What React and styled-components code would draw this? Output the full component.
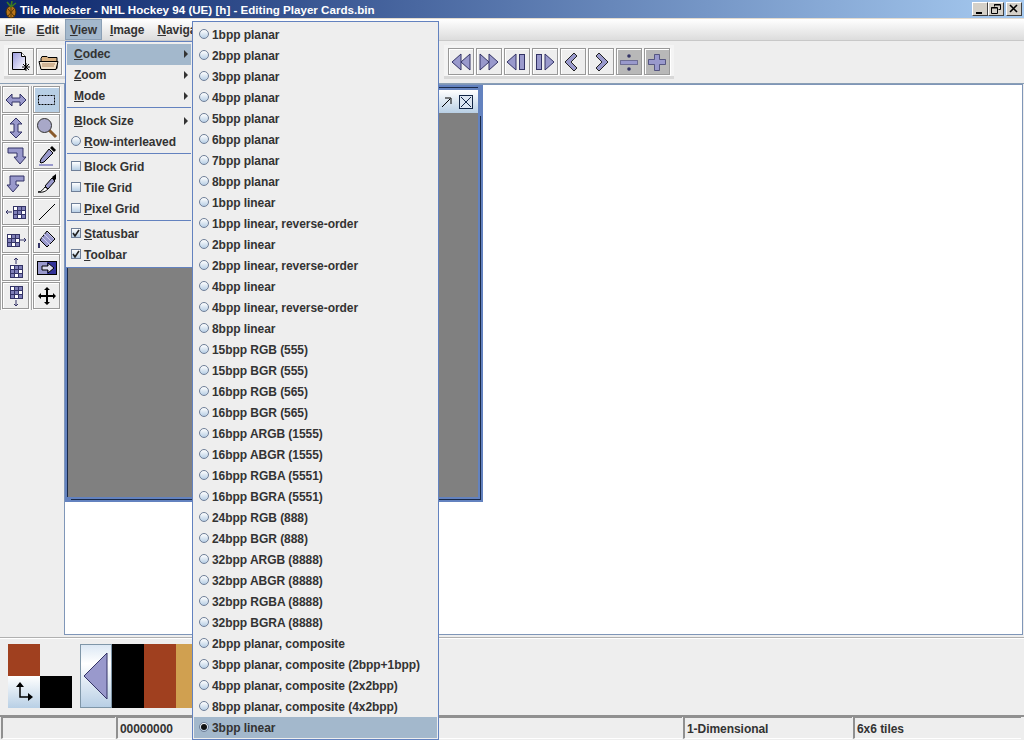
import React from 'react'
import styled, { createGlobalStyle } from 'styled-components'

const GlobalStyle = createGlobalStyle`
  html, body { margin: 0; padding: 0; background: #eeeeee; }
  body { font-family: "Liberation Sans", Arial, sans-serif; font-size: 12px; font-weight: bold; letter-spacing: -0.05px; color: #333333; }
`

const FILL = '#9999cc'
const LINE = '#333366'

const Glyph = ({ size = 22, children }) => (
  <svg width={size} height={size} viewBox="0 0 22 22">{children}</svg>
)

const Arrow = ({ d }) => <path d={d} fill={FILL} stroke={LINE} strokeWidth="1" strokeLinejoin="miter" />

const gridCells = (x, y, cols, rows, cell = 4) => {
  const out = []
  for (let r = 0; r < rows; r++) {
    for (let c = 0; c < cols; c++) {
      out.push(<rect key={`${r}-${c}`} x={x + c * cell + 0.5} y={y + r * cell + 0.5} width={cell} height={cell} fill={(r + c) % 3 === 0 ? '#ffffff' : '#8080b8'} stroke={LINE} />)
    }
  }
  return out
}

const icons = {
  newDoc: (
    <Glyph>
      <defs>
        <linearGradient id="docFill" x1="0" y1="0" x2="1" y2="1"><stop offset="0" stopColor="#9999dd" /><stop offset="1" stopColor="#ffffff" /></linearGradient>
      </defs>
      <path d="M2.5 1.5h9l4 4v13h-13z" fill="url(#docFill)" stroke="#000" />
      <path d="M11.5 1.5v4h4" fill="#fff" stroke="#000" />
      <path d="M16 12v8M12 16h8M13 13l6 6M19 13l-6 6" stroke="#000" fill="none" />
    </Glyph>
  ),
  folder: (
    <Glyph>
      <path d="M3 7.5l1-2h5l1 1h9v11H3z" fill="#d8b080" stroke="#000" />
      <path d="M1 10.5h15l4 0-2 8H3z" fill="#f0e0c8" stroke="#000" />
      <path d="M4 13h13M4 15h12" stroke="#b08860" />
    </Glyph>
  ),
  wider: <Glyph><Arrow d="M1 11l6-6v4h8V5l6 6-6 6v-4H7v4z" /></Glyph>,
  taller: <Glyph><Arrow d="M11 1l6 6h-4v8h4l-6 6-6-6h4V7H5z" /></Glyph>,
  downRight: <Glyph><Arrow d="M3 3h15v9h3l-6 7-6-7h3V8H3z" /></Glyph>,
  downLeft: <Glyph><Arrow d="M19 3H5v9H2l6 7 6-7h-3V8h8z" /></Glyph>,
  rowsLeft: (
    <Glyph>
      <path d="M1 11h6M1 11l2-2M1 11l2 2" stroke={LINE} fill="none" />
      {gridCells(8, 5, 3, 3)}
    </Glyph>
  ),
  rowsRight: (
    <Glyph>
      {gridCells(2, 5, 3, 3)}
      <path d="M15 11h6M21 11l-2-2M21 11l-2 2" stroke={LINE} fill="none" />
    </Glyph>
  ),
  colsUp: (
    <Glyph>
      <path d="M11 1v6M11 1l-2 2M11 1l2 2" stroke={LINE} fill="none" />
      {gridCells(5, 8, 3, 3)}
    </Glyph>
  ),
  colsDown: (
    <Glyph>
      {gridCells(5, 1, 3, 3)}
      <path d="M11 15v6M11 21l-2-2M11 21l2-2" stroke={LINE} fill="none" />
    </Glyph>
  ),
  select: <Glyph><rect x="2.5" y="6.5" width="16" height="9" fill="#c0d0e8" stroke="#000" strokeDasharray="2 1" /></Glyph>,
  zoom: (
    <Glyph>
      <path d="M13 13l7 7" stroke="#8a5a2a" strokeWidth="3" />
      <circle cx="8.5" cy="8.5" r="7" fill="#a8a8c8" stroke="#333" />
    </Glyph>
  ),
  picker: (
    <Glyph>
      <path d="M13 4l4 4-9 9-3 1-1-1 1-3z" fill={FILL} stroke="#000" />
      <path d="M14 3l2-2 4 4-2 2z" fill="#000" />
      <path d="M3 20h14" stroke={FILL} strokeWidth="2" />
    </Glyph>
  ),
  brush: (
    <Glyph>
      <path d="M2 19c4 0 5-3 7-5l3 2c-2 2-5 4-10 3z" fill="#fff" stroke="#000" />
      <path d="M9 13l7-8 3 3-7 8z" fill={FILL} stroke="#000" />
      <path d="M16 4l4-3v5l-2 2z" fill="#000" />
    </Glyph>
  ),
  line: <Glyph><path d="M3 19L19 3" stroke="#000" /></Glyph>,
  bucket: (
    <Glyph>
      <path d="M11 2l8 8-8 8-7-7z" fill={FILL} stroke="#000" />
      <path d="M8 5l8 8M6 8l8 8M11 3l7 7" stroke="#ccccee" />
      <path d="M3 14v5" stroke={LINE} strokeWidth="2" />
    </Glyph>
  ),
  replace: (
    <Glyph>
      <rect x="1.5" y="4.5" width="19" height="13" fill="#333399" stroke="#000" />
      <rect x="2" y="5" width="9" height="12" fill={FILL} />
      <path d="M6 9h6V6l6 5-6 5v-3H6z" fill="#ddddee" stroke="#000" />
    </Glyph>
  ),
  move: <Glyph><path d="M11 2l3 3h-2v5h5V8l3 3-3 3v-2h-5v5h2l-3 3-3-3h2v-5H5v2l-3-3 3-3v2h5V5H8z" fill="#000" /></Glyph>,
  first: <Glyph><Arrow d="M11 3v16L2 11zM20 3v16l-9-8z" /></Glyph>,
  last: <Glyph><Arrow d="M2 3v16l9-8zM11 3v16l9-8z" /></Glyph>,
  pageUp: <Glyph><Arrow d="M10 3v16l-9-8z" /><rect x="13.5" y="3.5" width="5" height="15" fill={FILL} stroke={LINE} /></Glyph>,
  pageDown: <Glyph><rect x="2.5" y="3.5" width="5" height="15" fill={FILL} stroke={LINE} /><Arrow d="M11 3v16l9-8z" /></Glyph>,
  back: <Glyph><path d="M12 2l3 3-6 6 6 6-3 3-9-9z" fill={FILL} stroke="#222" /></Glyph>,
  forward: <Glyph><path d="M9 2l-3 3 6 6-6 6 3 3 9-9z" fill={FILL} stroke="#222" /></Glyph>,
  divide: (
    <Glyph>
      <circle cx="11" cy="5" r="1.8" fill={LINE} />
      <rect x="2.5" y="9.5" width="17" height="4" fill={FILL} stroke={LINE} strokeOpacity="0.5" />
      <circle cx="11" cy="18" r="1.8" fill={LINE} />
    </Glyph>
  ),
  plus: <Glyph><path d="M8.5 3.5h5v5h6v5h-6v6h-5v-6h-6v-5h6z" fill={FILL} stroke={LINE} strokeOpacity="0.7" /></Glyph>,
}

const Page = styled.div`
  position: relative;
  width: 1024px;
  height: 740px;
  overflow: hidden;
  display: flex;
  flex-direction: column;
  background: #eeeeee;
`

const TitleBar = styled.div`
  height: 18px;
  flex: none;
  display: flex;
  align-items: center;
  padding: 0 2px 0 3px;
  background: linear-gradient(90deg, #0a246a, #a6caf0);
`

const TitleText = styled.span`
  margin-left: 1px;
  font-size: 11.6px;
  letter-spacing: 0;
  color: #ffffff;
  white-space: nowrap;
  flex: 1;
`

const WinControls = styled.div`
  display: flex;
`

const WinButton = styled.div`
  width: 16px;
  height: 14px;
  margin-left: ${p => p.$gap || 0}px;
  background: #d4d0c8;
  border: 1px solid;
  border-color: #ffffff #404040 #404040 #ffffff;
  box-sizing: border-box;
  display: flex;
  align-items: center;
  justify-content: center;
`

const MenuBar = styled.div`
  height: 23px;
  flex: none;
  box-sizing: border-box;
  display: flex;
  border-top: 1px solid #e4dcd0;
  border-bottom: 1px solid #c8c8c8;
  background: linear-gradient(180deg, #ffffff, #dcdcdc);
`

const MenuTitle = styled.div`
  height: 21px;
  line-height: 23px;
  box-sizing: border-box;
  padding: 0 ${p => p.$pad || 6}px;
  ${p => p.$open && `
    background: #a3b8cc;
    outline: 1px solid #8a9fb5;
    outline-offset: -1px;
  `}
`

const ToolBar = styled.div`
  height: 43px;
  flex: none;
  box-sizing: border-box;
  display: flex;
  padding: 4px 4px 0;
  border-bottom: 1px solid #8a9fb5;
`

const ToolGroup = styled.div`
  height: 34px;
  box-sizing: border-box;
  display: flex;
  gap: 2px;
  padding: 3px 4px 0;
  margin-left: ${p => p.$offset || 0}px;
  background: #f4f4f4;
  border-bottom: 3px solid #d8d8d8;
`

const Btn = styled.div`
  width: ${p => p.$w || 26}px;
  height: 27px;
  box-sizing: border-box;
  display: flex;
  align-items: center;
  justify-content: center;
  background: ${p => (p.$active ? '#b8cfe5' : p.$pressed ? '#b8b8b8' : '#eeeeee')};
  border: 1px solid #999999;
  box-shadow: inset 1px 1px 0 #ffffff, 1px 1px 0 #ffffff;
`

const Workspace = styled.div`
  flex: 1;
  display: flex;
  min-height: 0;
`

const ToolDock = styled.div`
  width: 64px;
  flex: none;
  box-sizing: border-box;
  display: flex;
  gap: 2px;
  padding-top: 2px;
  align-items: flex-start;
`

const ToolColumn = styled.div`
  display: flex;
  flex-direction: column;
  gap: 1px;
  padding-left: 2px;
  padding-bottom: 1px;
  background: linear-gradient(90deg, #a8a8a8 0, #a8a8a8 1px, #ffffff 1px, #ffffff 2px, transparent 2px);
`

const Desktop = styled.div`
  position: relative;
  flex: 1;
  margin-right: 1px;
  margin-bottom: 2px;
  background: #ffffff;
  border: 1px solid #7f96b8;
`

const InternalFrame = styled.div`
  position: absolute;
  left: 0;
  top: 0;
  width: 418px;
  height: 417px;
  box-sizing: border-box;
  display: flex;
  flex-direction: column;
  padding: 5px 5px 5px 3px;
  background: #6382bf;
`

const FrameTitle = styled.div`
  height: 23px;
  flex: none;
  display: flex;
  justify-content: flex-end;
  align-items: center;
  padding-right: 5px;
  background: linear-gradient(180deg, #ffffff, #b8cfe5);
  box-shadow: 0 -2px 0 #6382bf, 0 -3px 0 #1a2a4a;
`

const FrameClose = styled.div`
  width: 14px;
  height: 14px;
  box-sizing: border-box;
  margin-left: 6px;
  display: flex;
  background: #dce6f2;
  border: 1px solid #122646;
`

const FrameBody = styled.div`
  flex: 1;
  background: #808080;
  box-shadow: -1px 0 0 #1a2a4a, 2px 2px 0 #6382bf, 3px 3px 0 #1a2a4a;
`

const PaletteBar = styled.div`
  height: 80px;
  flex: none;
  box-sizing: border-box;
  display: flex;
  padding: 6px 8px 0;
  border-top: 1px solid #b0b0b0;
  border-bottom: 2px solid #909090;
  box-shadow: inset 0 1px 0 #ffffff;
`

const ColorPair = styled.div`
  display: grid;
  grid-template-columns: 32px 32px;
  grid-template-rows: 32px 32px;
  width: 64px;
  height: 64px;
  margin-right: 8px;
`

const Swatch = styled.div`
  width: ${p => p.$w || 32}px;
  height: ${p => p.$h || 32}px;
  background: ${p => p.$color};
`

const SwapCell = styled.div`
  display: flex;
  align-items: center;
  justify-content: center;
  background: linear-gradient(180deg, #ffffff, #b8cfe5);
`

const PalBack = styled.div`
  width: 32px;
  height: 64px;
  box-sizing: border-box;
  display: flex;
  align-items: center;
  border: 1px solid #7f96a8;
  background: linear-gradient(180deg, #dce8f4, #ffffff 30%, #b8cfe5);
`

const PalRow = styled.div`
  display: flex;
`

const StatusBar = styled.div`
  height: 23px;
  flex: none;
  display: flex;
  gap: 1px;
  padding-left: 1px;
`

const StatusCell = styled.div`
  width: ${p => p.$w}px;
  height: 22px;
  box-sizing: border-box;
  padding-left: 2px;
  line-height: 22px;
  background: #eeeeee;
  border-left: 2px solid #909090;
  border-top: 1px solid #909090;
  border-bottom: 1px solid #ffffff;
  white-space: nowrap;
`

const Popup = styled.div`
  position: absolute;
  left: ${p => p.$x}px;
  top: ${p => p.$y}px;
  width: ${p => p.$w}px;
  box-sizing: border-box;
  padding: 2px 1px 1px;
  background: #eeeeee;
  border: 1px solid #6382bf;
  white-space: nowrap;
`

const MenuItem = styled.div`
  position: relative;
  height: 21px;
  line-height: 21px;
  display: flex;
  align-items: center;
  padding-left: ${p => p.$indent}px;
  ${p => p.$selected && 'background: #a3b8cc;'}
`

const Label = styled.span`
  padding-top: ${p => p.$drop || 0}px;
  line-height: 19px;
`

const Separator = styled.div`
  height: 1px;
  margin: 0 0 3px;
  background: #6382bf;
`

const Mark = styled.span`
  width: 10px;
  height: 10px;
  flex: none;
  margin-right: 3px;
  margin-bottom: ${p => p.$lift}px;
  box-sizing: border-box;
  display: flex;
  align-items: center;
  justify-content: center;
  border: 1px solid #6f7f98;
  border-radius: ${p => (p.$round ? '50%' : '0')};
  background: linear-gradient(180deg, #ffffff, #b8cfe5);
`

const Dot = styled.span`
  width: 6px;
  height: 6px;
  border-radius: 50%;
  background: #111111;
`

const SubArrow = styled.span`
  position: absolute;
  right: 3px;
  top: 6px;
  border-left: 4px solid #333333;
  border-top: 4px solid transparent;
  border-bottom: 4px solid transparent;
`

const viewMenu = [
  { label: 'Codec', key: 'C', sub: true, selected: true },
  { label: 'Zoom', key: 'Z', sub: true },
  { label: 'Mode', key: 'M', sub: true },
  'sep',
  { label: 'Block Size', key: 'B', sub: true },
  { label: 'Row-interleaved', key: 'R', mark: 'radio' },
  'sep',
  { label: 'Block Grid', mark: 'check' },
  { label: 'Tile Grid', mark: 'check' },
  { label: 'Pixel Grid', key: 'P', mark: 'check' },
  'sep',
  { label: 'Statusbar', key: 'S', mark: 'check', on: true },
  { label: 'Toolbar', key: 'T', mark: 'check', on: true },
]

const codecs = [
  '1bpp planar', '2bpp planar', '3bpp planar', '4bpp planar', '5bpp planar', '6bpp planar', '7bpp planar', '8bpp planar',
  '1bpp linear', '1bpp linear, reverse-order', '2bpp linear', '2bpp linear, reverse-order', '4bpp linear', '4bpp linear, reverse-order', '8bpp linear',
  '15bpp RGB (555)', '15bpp BGR (555)', '16bpp RGB (565)', '16bpp BGR (565)', '16bpp ARGB (1555)', '16bpp ABGR (1555)', '16bpp RGBA (5551)', '16bpp BGRA (5551)',
  '24bpp RGB (888)', '24bpp BGR (888)', '32bpp ARGB (8888)', '32bpp ABGR (8888)', '32bpp RGBA (8888)', '32bpp BGRA (8888)',
  '2bpp planar, composite', '3bpp planar, composite (2bpp+1bpp)', '4bpp planar, composite (2x2bpp)', '8bpp planar, composite (4x2bpp)', '3bpp linear',
]

const leftTools = ['wider', 'taller', 'downRight', 'downLeft', 'rowsLeft', 'rowsRight', 'colsUp', 'colsDown']
const rightTools = ['select', 'zoom', 'picker', 'brush', 'line', 'bucket', 'replace', 'move']
const navTools = ['first', 'last', 'pageUp', 'pageDown', 'back', 'forward', 'divide', 'plus']

const Mnemonic = ({ text, k }) => {
  if (!k) return <span>{text}</span>
  return <span><u>{k}</u>{text.slice(1)}</span>
}

export default function App() {
  return (
    <Page>
      <GlobalStyle />
      <TitleBar>
        <svg width="16" height="17" viewBox="0 0 16 17">
          <ellipse cx="8" cy="11" rx="5" ry="6" fill="#b8741a" stroke="#3a2a08" />
          <path d="M5 8l6 7M11 8l-6 7M8 6v10" stroke="#5a3a08" fill="none" />
          <path d="M8 6L4 1M8 6l1-6M8 6l5-4" stroke="#3d7a20" strokeWidth="1.6" fill="none" />
        </svg>
        <TitleText>Tile Molester - NHL Hockey 94 (UE) [h] - Editing Player Cards.bin</TitleText>
        <WinControls>
          <WinButton>
            <svg width="10" height="10" viewBox="0 0 10 10"><path d="M1 8h6v2H1z" fill="#000" /></svg>
          </WinButton>
          <WinButton>
            <svg width="10" height="10" viewBox="0 0 10 10"><path d="M3.5 2.5V.5h6v5h-2M.5 3.5h6v6h-6z" fill="none" stroke="#000" /><path d="M3 1h6M0 4h6" stroke="#000" /></svg>
          </WinButton>
          <WinButton $gap={2}>
            <svg width="10" height="10" viewBox="0 0 10 10"><path d="M1 1l7 7M8 1L1 8" stroke="#000" strokeWidth="1.6" /></svg>
          </WinButton>
        </WinControls>
      </TitleBar>

      <MenuBar>
        <MenuTitle $pad={5}><u>F</u>ile</MenuTitle>
        <MenuTitle $pad={6}><u>E</u>dit</MenuTitle>
        <MenuTitle $open $pad={5}><u>V</u>iew</MenuTitle>
        <MenuTitle $pad={8}><u>I</u>mage</MenuTitle>
        <MenuTitle $pad={5}><u>N</u>avigate</MenuTitle>
      </MenuBar>

      <ToolBar>
        <ToolGroup>
          <Btn>{icons.newDoc}</Btn>
          <Btn>{icons.folder}</Btn>
        </ToolGroup>
        <ToolGroup $offset={378}>
          {navTools.map(name => (
            <Btn key={name} $pressed={name === 'divide' || name === 'plus'}>{icons[name]}</Btn>
          ))}
        </ToolGroup>
      </ToolBar>

      <Workspace>
        <ToolDock>
          <ToolColumn>
            {leftTools.map(name => <Btn key={name} $w={27}>{icons[name]}</Btn>)}
          </ToolColumn>
          <ToolColumn>
            {rightTools.map(name => <Btn key={name} $w={27} $active={name === 'select'}>{icons[name]}</Btn>)}
          </ToolColumn>
        </ToolDock>
        <Desktop>
          <InternalFrame>
            <FrameTitle>
              <svg width="12" height="12" viewBox="0 0 12 12"><path d="M1 11l8-8M4 2h6v6" fill="none" stroke="#000" /></svg>
              <FrameClose>
                <svg width="12" height="12" viewBox="0 0 12 12"><path d="M1 1l10 10M11 1L1 11" stroke="#122646" /></svg>
              </FrameClose>
            </FrameTitle>
            <FrameBody />
          </InternalFrame>
        </Desktop>
      </Workspace>

      <PaletteBar>
        <ColorPair>
          <Swatch $color="#a0401f" />
          <span />
          <SwapCell>
            <svg width="20" height="22" viewBox="0 0 20 22">
              <path d="M6 5v11h9" fill="none" stroke="#000" strokeWidth="1.5" />
              <path d="M6 1l-4 5h8zM19 16l-5-4v8z" fill="#000" />
            </svg>
          </SwapCell>
          <Swatch $color="#000000" />
        </ColorPair>
        <PalRow>
          <PalBack>
            <svg width="28" height="48" viewBox="0 0 28 48"><path d="M3 24L26 1v46z" fill={FILL} stroke={LINE} /></svg>
          </PalBack>
          <Swatch $color="#000000" $h={64} />
          <Swatch $color="#a0401f" $h={64} />
          <Swatch $color="#d0a050" $h={64} />
        </PalRow>
      </PaletteBar>

      <StatusBar>
        <StatusCell $w={114} />
        <StatusCell $w={566}>00000000</StatusCell>
        <StatusCell $w={169}>1-Dimensional</StatusCell>
        <StatusCell $w={168}>6x6 tiles</StatusCell>
      </StatusBar>

      <Popup $x={65} $y={41} $w={128}>
        {viewMenu.map((item, i) => {
          if (item === 'sep') return <Separator key={i} />
          return (
            <MenuItem key={item.label} $indent={item.mark ? 4 : 7} $selected={item.selected}>
              {item.mark && (
                <Mark $round={item.mark === 'radio'} $lift={3}>
                  {item.on && (
                    <svg width="8" height="8" viewBox="0 0 8 8"><path d="M1 4l2 3 4-6" fill="none" stroke="#222" strokeWidth="1.6" /></svg>
                  )}
                </Mark>
              )}
              <Mnemonic text={item.label} k={item.key} />
              {item.sub && <SubArrow />}
            </MenuItem>
          )
        })}
      </Popup>

      <Popup $x={192} $y={21} $w={247}>
        {codecs.map((name, i) => {
          const current = i === codecs.length - 1
          return (
            <MenuItem key={name} $indent={5} $selected={current}>
              <Mark $round $lift={2}>{current && <Dot />}</Mark>
              <Label $drop={2}>{name}</Label>
            </MenuItem>
          )
        })}
      </Popup>
    </Page>
  )
}
